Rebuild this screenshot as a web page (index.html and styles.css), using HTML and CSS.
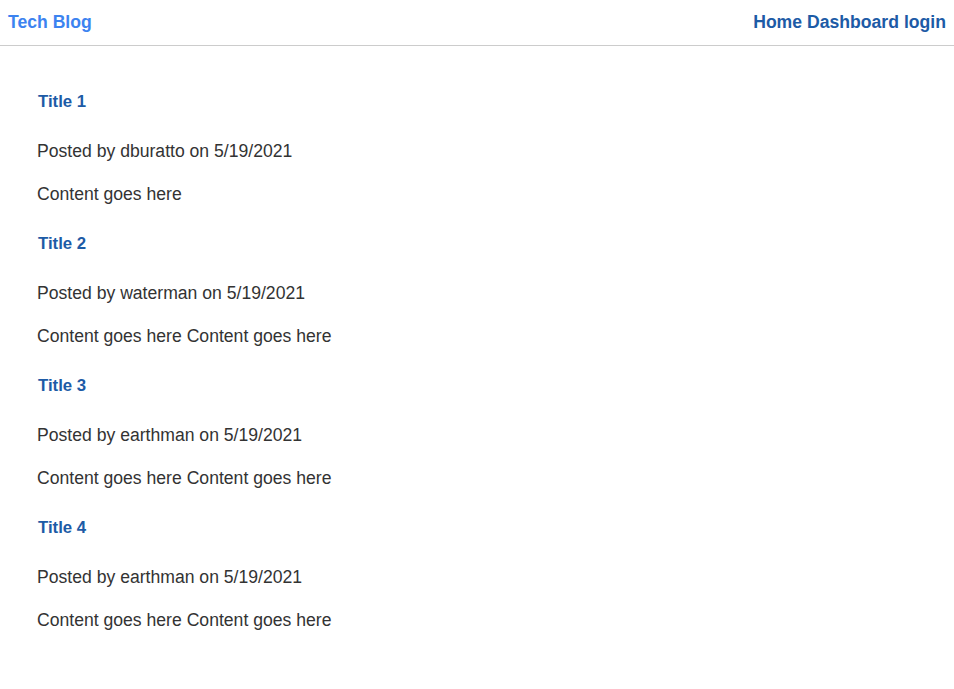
FILE: index.html
```html
<!DOCTYPE html>
<html lang="en">
<head>
<meta charset="utf-8">
<title>Tech Blog</title>
<link rel="stylesheet" href="styles.css">
</head>
<body>
<header class="topbar">
  <a class="brand" href="#">Tech Blog</a>
  <nav class="nav">
    <a href="#">Home</a>
    <a href="#">Dashboard</a>
    <a href="#">login</a>
  </nav>
</header>
<main class="posts">
  <article class="post">
    <h2 class="post-title">Title 1</h2>
    <p class="post-meta">Posted by dburatto on 5/19/2021</p>
    <p class="post-body">Content goes here</p>
  </article>
  <article class="post">
    <h2 class="post-title">Title 2</h2>
    <p class="post-meta">Posted by waterman on 5/19/2021</p>
    <p class="post-body">Content goes here Content goes here</p>
  </article>
  <article class="post">
    <h2 class="post-title">Title 3</h2>
    <p class="post-meta">Posted by earthman on 5/19/2021</p>
    <p class="post-body">Content goes here Content goes here</p>
  </article>
  <article class="post">
    <h2 class="post-title">Title 4</h2>
    <p class="post-meta">Posted by earthman on 5/19/2021</p>
    <p class="post-body">Content goes here Content goes here</p>
  </article>
</main>
</body>
</html>
```
FILE: styles.css
```css
html, body {
  margin: 0;
  padding: 0;
  background: #ffffff;
  font-family: "Liberation Sans", Arial, sans-serif;
  color: #333333;
}

a {
  text-decoration: none;
}

.topbar {
  display: flex;
  justify-content: space-between;
  align-items: center;
  height: 45px;
  padding: 0 8px;
  border-bottom: 1px solid #cccccc;
}

.brand {
  font-size: 17.6px;
  font-weight: bold;
  color: #3c83f0;
}

.nav {
  display: flex;
  gap: 5px;
}

.nav a {
  font-size: 17.6px;
  font-weight: bold;
  color: #1d5ba6;
}

.posts {
  padding: 46px 37px 0;
}

.post-title {
  margin: 0 0 29px;
  font-size: 16.8px;
  line-height: 20px;
  font-weight: bold;
  color: #1d5ba6;
  padding-left: 1px;
}

.post-meta {
  margin: 0 0 23px;
  font-size: 17.6px;
  line-height: 20px;
}

.post-body {
  margin: 0 0 30px;
  font-size: 17.6px;
  line-height: 20px;
}
```
